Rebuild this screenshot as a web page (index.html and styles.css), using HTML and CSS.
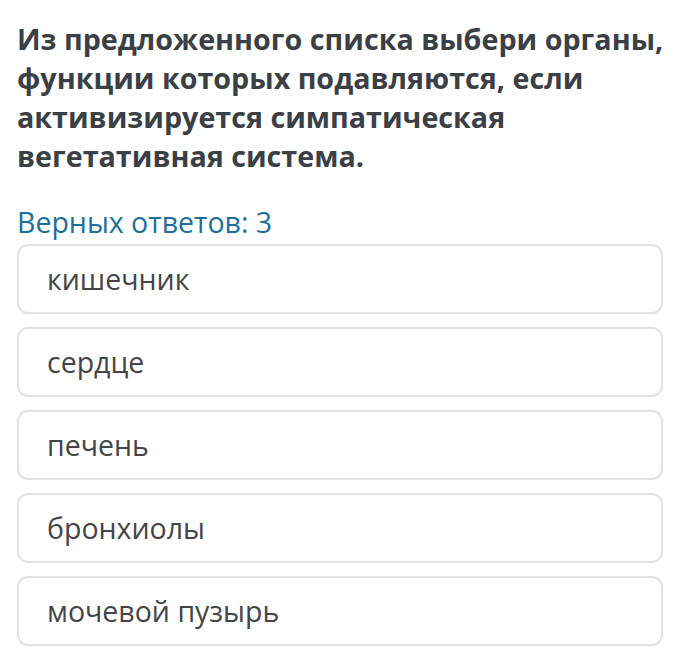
FILE: index.html
```html
<!DOCTYPE html>
<html lang="ru">
  <head>
    <meta charset="UTF-8" />
    <meta name="viewport" content="width=device-width, initial-scale=1.0" />
    <title>Вопрос</title>
    <link rel="stylesheet" href="styles.css">
  </head>
  <body>
    <div id="page">
      <h1 class="question">
        Из предложенного списка выбери органы,<br>
        функции которых подавляются, если<br>
        активизируется симпатическая<br>
        вегетативная система.
      </h1>

      <div class="answers-count">Верных ответов: 3</div>

      <div class="options">
        <div class="option">кишечник</div>
        <div class="option">сердце</div>
        <div class="option">печень</div>
        <div class="option">бронхиолы</div>
        <div class="option">мочевой пузырь</div>
      </div>
    </div>
  </body>
</html>
```

FILE: styles.css
```css
html,
body {
  margin: 0;
  padding: 0;
  background: #fff;
}
body {
  font-family: "Open Sans", "Noto Sans", sans-serif;
  color: #444;
}
#page {
  padding: 19px 15px 0 17px;
}

/* Question */
.question {
  margin: 0 -15px 0 0;
  font-size: 28.7px;
  line-height: 39px;
  font-weight: 700;
  color: #3b3f46;
  white-space: nowrap;
}
.answers-count {
  margin-top: 30px;
  font-size: 28.5px;
  line-height: 34px;
  color: #1d6f98;
}

/* Options */
.options {
  display: flex;
  flex-direction: column;
  gap: 13px;
  margin-top: 5px;
}
.option {
  height: 66px;
  display: flex;
  align-items: center;
  padding: 0 28px;
  border: 2px solid #e2e2e2;
  border-radius: 11px;
  font-size: 28.5px;
  color: #454545;
}
```
